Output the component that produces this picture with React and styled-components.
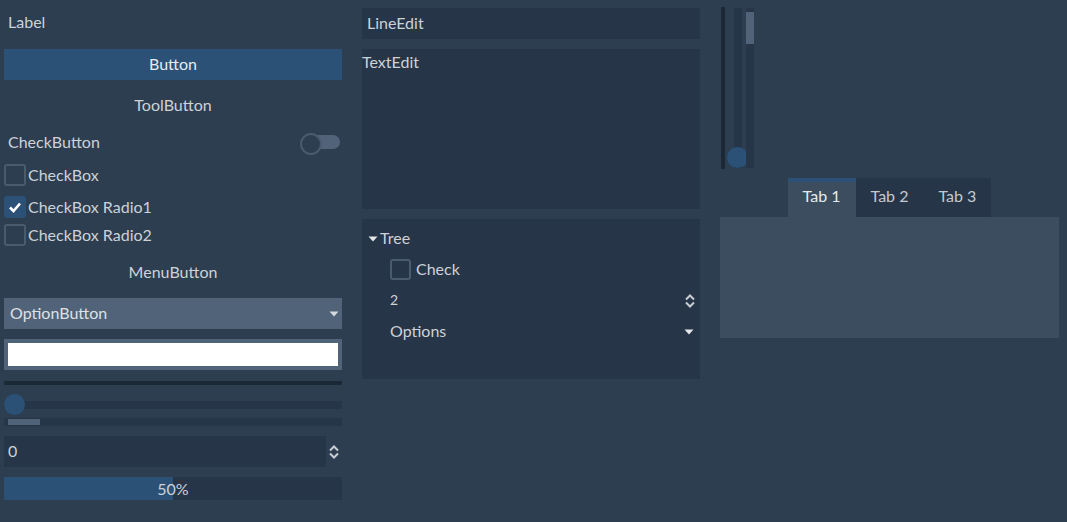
import React from "react";
import styled, { createGlobalStyle } from "styled-components";

const C = {
  bg: "#2c3e50",
  field: "#263547",
  accent: "#2b5177",
  muted: "#516379",
  panel: "#3b4d5f",
  dark: "#1b2836",
  text: "#cdd2d7",
  bright: "#e8ebee",
  border: "#4a5b6e",
};

const Global = createGlobalStyle`
  html, body { margin: 0; padding: 0; background: ${C.bg}; }
  body {
    font-family: Lato, "Noto Sans", sans-serif;
    font-size: 16px;
    color: ${C.text};
    width: 1067px; height: 522px; overflow: hidden;
  }
  * { box-sizing: border-box; }
`;

const Page = styled.div`
  display: flex;
  gap: 20px;
  padding: 0 8px 0 4px;
`;

const Column = styled.div`
  display: flex;
  flex-direction: column;
  width: ${(p) => p.$w || 338}px;
  flex: none;
`;

const Item = styled.div`
  margin-top: ${(p) => p.$mt || 0}px;
  height: ${(p) => p.$h}px;
  flex: none;
`;

const Txt = styled.span`
  padding-bottom: 2px;
`;

const LabelText = styled(Item)`
  display: flex;
  align-items: center;
  padding: 0 0 2px 4px;
`;

const Button = styled(Item)`
  display: flex;
  align-items: center;
  justify-content: center;
  padding-bottom: 2px;
  background: ${(p) => (p.$flat ? "transparent" : C.accent)};
  color: ${(p) => (p.$flat ? C.text : C.bright)};
`;

const CheckButtonRow = styled(Item)`
  display: flex;
  align-items: center;
  justify-content: space-between;
  padding: 0 2px 0 4px;
`;

const Toggle = styled.div`
  position: relative;
  width: 40px;
  height: 18px;
  &::before {
    content: "";
    position: absolute;
    left: 6px;
    right: 0;
    top: 2px;
    height: 14px;
    border-radius: 7px;
    background: ${C.muted};
  }
  &::after {
    content: "";
    position: absolute;
    left: 0;
    top: 0;
    width: 18px;
    height: 18px;
    border-radius: 50%;
    border: 2px solid ${C.border};
    background: ${C.bg};
  }
`;

const CheckRow = styled(Item)`
  display: flex;
  align-items: center;
  gap: ${(p) => p.$gap ?? 2}px;
`;

const Box = styled.div`
  width: ${(p) => p.$size || 22}px;
  height: ${(p) => p.$size || 22}px;
  border-radius: 3px;
  flex: none;
  display: flex;
  align-items: center;
  justify-content: center;
  border: ${(p) => (p.$on ? "none" : `2px solid ${C.border}`)};
  background: ${(p) => (p.$on ? C.accent : "transparent")};
`;

const Option = styled(Item)`
  display: flex;
  align-items: center;
  justify-content: space-between;
  padding: 0 3px 0 6px;
  background: ${C.muted};
  color: #dde1e5;
`;

const ColorButton = styled(Item)`
  background: ${C.muted};
  padding: 4px;
`;

const Swatch = styled.div`
  height: 100%;
  background: #ffffff;
`;

const Separator = styled(Item)`
  background: ${C.dark};
`;

const HSlider = styled(Item)`
  position: relative;
  display: flex;
  align-items: center;
`;

const Track = styled.div`
  width: 100%;
  height: 8px;
  background: ${C.field};
`;

const Grabber = styled.div`
  position: absolute;
  left: ${(p) => p.$x}px;
  top: ${(p) => p.$y}px;
  width: 21px;
  height: 21px;
  border-radius: 50%;
  background: ${C.accent};
`;

const HScroll = styled(Item)`
  background: ${C.field};
  padding: 1px 4px;
`;

const ScrollThumb = styled.div`
  width: ${(p) => p.$w || "100%"};
  height: ${(p) => p.$h || "100%"};
  background: ${C.muted};
`;

const SpinRow = styled(Item)`
  display: flex;
  align-items: center;
`;

const Field = styled.div`
  flex: 1;
  height: 100%;
  background: ${C.field};
  display: flex;
  align-items: center;
  padding: 0 0 2px ${(p) => p.$pl ?? 4}px;
`;

const SpinIcon = styled.div`
  width: 16px;
  display: flex;
  justify-content: center;
`;

const Progress = styled(Item)`
  position: relative;
  background: ${C.field};
`;

const ProgressFill = styled.div`
  height: 100%;
  background: ${C.accent};
`;

const ProgressText = styled.div`
  position: absolute;
  inset: 0;
  display: flex;
  align-items: center;
  justify-content: center;
  padding-bottom: 1px;
  color: ${C.text};
`;

const LineEdit = styled(Item)`
  background: ${C.field};
  display: flex;
  align-items: center;
  padding: 0 0 2px 5px;
`;

const TextEdit = styled(Item)`
  background: ${C.field};
  padding: 3px 0 0 0;
  line-height: 20px;
`;

const Tree = styled(Item)`
  background: ${C.field};
  padding-top: 4px;
  display: flex;
  flex-direction: column;
`;

const TreeRow = styled.div`
  height: 31px;
  display: flex;
  align-items: center;
  justify-content: space-between;
  padding-left: ${(p) => p.$indent}px;
  padding-right: 4px;
`;

const Inline = styled.div`
  display: flex;
  align-items: center;
  gap: ${(p) => p.$gap || 0}px;
  padding-right: ${(p) => p.$pr || 0}px;
`;

const Small = styled.span`
  font-size: 14px;
  padding-bottom: 2px;
`;

const TopRow = styled.div`
  display: flex;
  height: 162px;
  margin-top: 7px;
  padding-left: 1px;
`;

const VSep = styled.div`
  width: 4px;
  height: 100%;
  background: ${C.dark};
`;

const VSlider = styled.div`
  position: relative;
  width: 8px;
  height: 160px;
  margin: 1px 0 0 9px;
  background: ${C.field};
`;

const VScroll = styled.div`
  position: relative;
  width: 8px;
  height: 160px;
  margin: 1px 0 0 4px;
  padding-top: 4px;
  background: ${C.field};
`;

const TabBar = styled.div`
  margin-top: 9px;
  display: flex;
  justify-content: center;
  height: 39px;
`;

const Tab = styled.div`
  display: flex;
  align-items: center;
  padding: 0 15px 4px;
  background: ${(p) => (p.$active ? C.panel : C.field)};
  box-shadow: ${(p) => (p.$active ? `inset 0 4px 0 ${C.accent}` : "none")};
  color: ${(p) => (p.$active ? C.bright : "#c3c9d0")};
`;

const TabPanel = styled.div`
  height: 121px;
  background: ${C.panel};
`;

const Chevrons = () => (
  <svg width="12" height="16" viewBox="0 0 12 16">
    <path d="M2 6.5 L6 2.5 L10 6.5 M2 9.5 L6 13.5 L10 9.5" fill="none" stroke="#c8cdd3" strokeWidth="2" />
  </svg>
);

const Arrow = ({ color = "#d6dade" }) => (
  <svg width="10" height="6" viewBox="0 0 10 6">
    <path d="M0.5 0.5 H9.5 L5 5.5 Z" fill={color} />
  </svg>
);

const Check = () => (
  <svg width="14" height="12" viewBox="0 0 14 12">
    <path d="M2 6.5 L5.5 10 L12 2.5" fill="none" stroke="#ffffff" strokeWidth="2.6" />
  </svg>
);

export default function App() {
  return (
    <>
      <Global />
      <Page>
        <Column>
          <LabelText $mt={7} $h={30}>Label</LabelText>
          <Button $mt={12} $h={31}>Button</Button>
          <Button $mt={10} $h={31} $flat>ToolButton</Button>
          <CheckButtonRow $mt={6} $h={30}>
            <Txt>CheckButton</Txt>
            <Toggle />
          </CheckButtonRow>
          <CheckRow $mt={7} $h={22}>
            <Box />
            <Txt>CheckBox</Txt>
          </CheckRow>
          <CheckRow $mt={10} $h={22}>
            <Box $on><Check /></Box>
            <Txt>CheckBox Radio1</Txt>
          </CheckRow>
          <CheckRow $mt={6} $h={22}>
            <Box />
            <Txt>CheckBox Radio2</Txt>
          </CheckRow>
          <Button $mt={11} $h={30} $flat>MenuButton</Button>
          <Option $mt={11} $h={31}>
            <Txt>OptionButton</Txt>
            <Arrow />
          </Option>
          <ColorButton $mt={10} $h={31}><Swatch /></ColorButton>
          <Separator $mt={11} $h={4} />
          <HSlider $mt={9} $h={21}>
            <Track />
            <Grabber $x={0} $y={0} />
          </HSlider>
          <HScroll $mt={3} $h={8}>
            <ScrollThumb $w="32px" />
          </HScroll>
          <SpinRow $mt={10} $h={31}>
            <Field>0</Field>
            <SpinIcon><Chevrons /></SpinIcon>
          </SpinRow>
          <Progress $mt={10} $h={23}>
            <ProgressFill style={{ width: "50%" }} />
            <ProgressText>50%</ProgressText>
          </Progress>
        </Column>

        <Column>
          <LineEdit $mt={8} $h={31}>LineEdit</LineEdit>
          <TextEdit $mt={10} $h={160}>TextEdit</TextEdit>
          <Tree $mt={10} $h={160}>
            <TreeRow $indent={6}>
              <Inline $gap={2}><Arrow color="#e4e7ea" /><Txt>Tree</Txt></Inline>
            </TreeRow>
            <TreeRow $indent={28}>
              <Inline $gap={5}><Box $size={21} /><Txt>Check</Txt></Inline>
            </TreeRow>
            <TreeRow $indent={28}>
              <Small>2</Small>
              <Chevrons />
            </TreeRow>
            <TreeRow $indent={28}>
              <Txt>Options</Txt>
              <Inline $pr={2}><Arrow color="#e4e7ea" /></Inline>
            </TreeRow>
          </Tree>
        </Column>

        <Column $w={339}>
          <TopRow>
            <VSep />
            <VSlider>
              <Grabber $x={-7} $y={139} />
            </VSlider>
            <VScroll>
              <ScrollThumb $h="32px" />
            </VScroll>
          </TopRow>
          <TabBar>
            <Tab $active>Tab 1</Tab>
            <Tab>Tab 2</Tab>
            <Tab>Tab 3</Tab>
          </TabBar>
          <TabPanel />
        </Column>
      </Page>
    </>
  );
}
